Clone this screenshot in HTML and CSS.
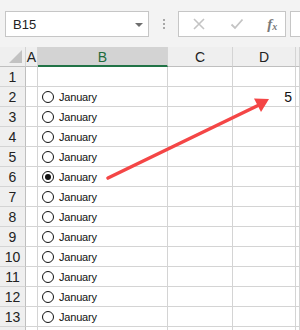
FILE: index.html
```html
<!DOCTYPE html>
<html>
<head>
<meta charset="utf-8">
<link rel="stylesheet" href="styles.css">
</head>
<body>
<div class="app">
  <div class="toolbar">
    <div class="namebox"><span class="nb-text">B15</span><span class="nb-arrow"></span></div>
    <div class="dots"><i></i><i></i><i></i></div>
    <div class="fbox">
      <svg class="ico-x" width="14" height="14" viewBox="0 0 14 14"><path d="M2 2 L12 12 M12 2 L2 12" stroke="#c4c4c4" stroke-width="1.6" fill="none"/></svg>
      <svg class="ico-ok" width="14" height="14" viewBox="0 0 14 14"><path d="M1.5 7.5 L5 11 L12.5 2.5" stroke="#c4c4c4" stroke-width="1.8" fill="none"/></svg>
      <span class="fx">f<sub>x</sub></span>
    </div>
    <div class="fbox2"></div>
  </div>
  <div class="sheet">
    <div class="ch corner"><span class="tri"></span></div>
    <div class="ch">A</div>
    <div class="ch sel">B</div>
    <div class="ch">C</div>
    <div class="ch">D</div>
    <div class="ch"></div>

    <div class="rh">1</div><div class="c"></div><div class="c"></div><div class="c"></div><div class="c"></div><div class="c"></div>
    <div class="rh">2</div><div class="c"></div><div class="c radio"><span class="rb"></span>January</div><div class="c"></div><div class="c num">5</div><div class="c"></div>
    <div class="rh">3</div><div class="c"></div><div class="c radio"><span class="rb"></span>January</div><div class="c"></div><div class="c"></div><div class="c"></div>
    <div class="rh">4</div><div class="c"></div><div class="c radio"><span class="rb"></span>January</div><div class="c"></div><div class="c"></div><div class="c"></div>
    <div class="rh">5</div><div class="c"></div><div class="c radio"><span class="rb"></span>January</div><div class="c"></div><div class="c"></div><div class="c"></div>
    <div class="rh">6</div><div class="c"></div><div class="c radio"><span class="rb on"></span>January</div><div class="c"></div><div class="c"></div><div class="c"></div>
    <div class="rh">7</div><div class="c"></div><div class="c radio"><span class="rb"></span>January</div><div class="c"></div><div class="c"></div><div class="c"></div>
    <div class="rh">8</div><div class="c"></div><div class="c radio"><span class="rb"></span>January</div><div class="c"></div><div class="c"></div><div class="c"></div>
    <div class="rh">9</div><div class="c"></div><div class="c radio"><span class="rb"></span>January</div><div class="c"></div><div class="c"></div><div class="c"></div>
    <div class="rh">10</div><div class="c"></div><div class="c radio"><span class="rb"></span>January</div><div class="c"></div><div class="c"></div><div class="c"></div>
    <div class="rh">11</div><div class="c"></div><div class="c radio"><span class="rb"></span>January</div><div class="c"></div><div class="c"></div><div class="c"></div>
    <div class="rh">12</div><div class="c"></div><div class="c radio"><span class="rb"></span>January</div><div class="c"></div><div class="c"></div><div class="c"></div>
    <div class="rh">13</div><div class="c"></div><div class="c radio"><span class="rb"></span>January</div><div class="c"></div><div class="c"></div><div class="c"></div>
    <div class="rh"></div><div class="c"></div><div class="c"></div><div class="c"></div><div class="c"></div><div class="c"></div>

    <svg class="arrow" width="300" height="330" viewBox="0 0 300 330">
      <line x1="108" y1="178" x2="259" y2="105" stroke="#f44646" stroke-width="3.6" stroke-linecap="round"/>
      <polygon points="269,99 254,98.5 261,112" fill="#f44646"/>
    </svg>
  </div>
</div>
</body>
</html>
```

FILE: styles.css
```css
* { box-sizing: border-box; }
html, body { margin: 0; padding: 0; }
body {
  width: 300px;
  height: 330px;
  overflow: hidden;
  background: #fff;
  font-family: "Liberation Sans", Arial, sans-serif;
}
.app { width: 300px; height: 330px; overflow: hidden; }

.toolbar {
  height: 47px;
  background: #f3f3f3;
  display: flex;
  align-items: flex-start;
  padding-top: 11px;
  padding-left: 5px;
}
.namebox {
  width: 147px;
  height: 26px;
  background: #fff;
  border: 1px solid #c6c6c6;
  display: flex;
  align-items: center;
  justify-content: space-between;
  padding: 0 5px 0 7px;
}
.nb-text { font-size: 13px; color: #222; }
.nb-arrow {
  width: 0; height: 0;
  border-left: 4px solid transparent;
  border-right: 4px solid transparent;
  border-top: 4px solid #6e6e6e;
  margin-top: 1px;
}
.dots {
  width: 30px;
  height: 26px;
  display: flex;
  flex-direction: column;
  align-items: center;
  justify-content: center;
  gap: 2px;
}
.dots i {
  display: block;
  width: 2px; height: 2px;
  background: #a8a8a8;
}
.fbox {
  width: 110px;
  height: 26px;
  background: #fff;
  border: 1px solid #c6c6c6;
  display: flex;
  align-items: center;
  padding-left: 13px;
}
.ico-x { margin-right: 24px; }
.ico-ok { margin-right: 23px; }
.fx {
  font-family: "Liberation Serif", "Times New Roman", serif;
  font-style: italic;
  font-weight: bold;
  font-size: 15px;
  color: #7a7a7a;
  line-height: 1;
}
.fx sub { font-size: 10px; vertical-align: -1px; }
.fbox2 {
  margin-left: 4px;
  width: 10px;
  height: 26px;
  background: #fff;
  border: 1px solid #c6c6c6;
  border-right: none;
}

.sheet {
  position: relative;
  display: grid;
  grid-template-columns: 26px 12px 130px 65px 63px 1fr;
  grid-template-rows: 20px repeat(14, 20px);
  font-size: 14px;
}
.ch {
  background: #efefef;
  border-right: 1px solid #d4d4d4;
  border-bottom: 1px solid #bfbfbf;
  color: #222;
  font-size: 14px;
  display: flex;
  align-items: center;
  justify-content: center;
  padding-top: 1px;
}
.ch.sel {
  background: #d3d3d3;
  color: #1e6b3c;
  border-bottom: 2px solid #217346;
}
.corner { position: relative; border-right-color: #d4d4d4; }
.tri {
  position: absolute;
  right: 3px;
  bottom: 3px;
  width: 0; height: 0;
  border-left: 13px solid transparent;
  border-bottom: 13px solid #c2c2c2;
}
.rh {
  background: #efefef;
  border-right: 1px solid #bfbfbf;
  border-bottom: 1px solid #d4d4d4;
  color: #222;
  font-size: 14px;
  display: flex;
  align-items: center;
  justify-content: center;
  padding-top: 1px;
}
.c {
  border-right: 1px solid #d4d4d4;
  border-bottom: 1px solid #d4d4d4;
}
.radio {
  display: flex;
  align-items: center;
  padding-left: 4px;
  font-size: 11px;
  letter-spacing: -0.2px;
  color: #111;
}
.rb {
  width: 12px;
  height: 12px;
  border: 1px solid #111;
  border-radius: 50%;
  margin-right: 5px;
  flex: none;
  display: flex;
  align-items: center;
  justify-content: center;
}
.rb.on::after {
  content: "";
  width: 6px;
  height: 6px;
  border-radius: 50%;
  background: #111;
}
.num {
  display: flex;
  align-items: center;
  justify-content: flex-end;
  padding-right: 3px;
  font-size: 14px;
  color: #111;
}
.arrow {
  position: absolute;
  left: 0;
  top: -47px;
  pointer-events: none;
}
```
